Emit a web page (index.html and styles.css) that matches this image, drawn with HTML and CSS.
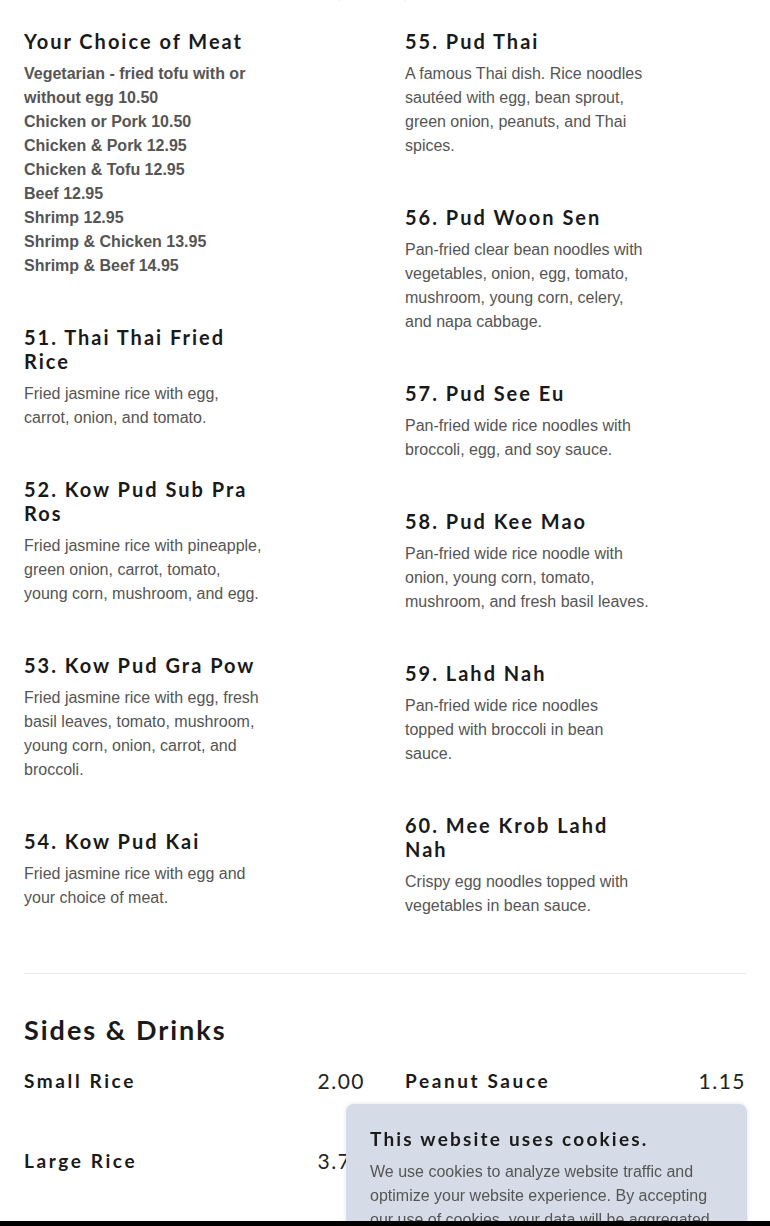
FILE: index.html
```html
<!DOCTYPE html>
<html lang="en">
<head>
<meta charset="utf-8">
<title>Menu - Fried Rice &amp; Noodles</title>
<link rel="stylesheet" href="styles.css">
</head>
<body>
<main class="page">
  <p class="intro">All noodle and rice dishes can be made mild, medium, hot or Thai hot.</p>
  <section class="menu-grid">
    <div class="col col-left">
      <div class="item">
        <h3 class="item-title">Your Choice of Meat</h3>
        <ul class="choices">
          <li>Vegetarian - fried tofu with or without egg 10.50</li>
          <li>Chicken or Pork 10.50</li>
          <li>Chicken &amp; Pork 12.95</li>
          <li>Chicken &amp; Tofu 12.95</li>
          <li>Beef 12.95</li>
          <li>Shrimp 12.95</li>
          <li>Shrimp &amp; Chicken 13.95</li>
          <li>Shrimp &amp; Beef 14.95</li>
        </ul>
      </div>
      <div class="item">
        <h3 class="item-title">51. Thai Thai Fried Rice</h3>
        <p class="desc">Fried jasmine rice with egg, carrot, onion, and tomato.</p>
      </div>
      <div class="item">
        <h3 class="item-title">52. Kow Pud Sub Pra Ros</h3>
        <p class="desc">Fried jasmine rice with pineapple, green onion, carrot, tomato, young corn, mushroom, and egg.</p>
      </div>
      <div class="item">
        <h3 class="item-title">53. Kow Pud Gra Pow</h3>
        <p class="desc">Fried jasmine rice with egg, fresh basil leaves, tomato, mushroom, young corn, onion, carrot, and broccoli.</p>
      </div>
      <div class="item">
        <h3 class="item-title">54. Kow Pud Kai</h3>
        <p class="desc">Fried jasmine rice with egg and your choice of meat.</p>
      </div>
    </div>
    <div class="col col-right">
      <div class="item">
        <h3 class="item-title">55. Pud Thai</h3>
        <p class="desc">A famous Thai dish. Rice noodles sautéed with egg, bean sprout, green onion, peanuts, and Thai spices.</p>
      </div>
      <div class="item">
        <h3 class="item-title">56. Pud Woon Sen</h3>
        <p class="desc">Pan-fried clear bean noodles with vegetables, onion, egg, tomato, mushroom, young corn, celery, and napa cabbage.</p>
      </div>
      <div class="item">
        <h3 class="item-title">57. Pud See Eu</h3>
        <p class="desc">Pan-fried wide rice noodles with broccoli, egg, and soy sauce.</p>
      </div>
      <div class="item">
        <h3 class="item-title">58. Pud Kee Mao</h3>
        <p class="desc">Pan-fried wide rice noodle with onion, young corn, tomato, mushroom, and fresh basil leaves.</p>
      </div>
      <div class="item">
        <h3 class="item-title">59. Lahd Nah</h3>
        <p class="desc">Pan-fried wide rice noodles topped with broccoli in bean sauce.</p>
      </div>
      <div class="item">
        <h3 class="item-title">60. Mee Krob Lahd Nah</h3>
        <p class="desc">Crispy egg noodles topped with vegetables in bean sauce.</p>
      </div>
    </div>
  </section>
  <hr class="divider">
  <section class="sides">
    <h2 class="section-title">Sides &amp; Drinks</h2>
    <div class="sides-grid">
      <div class="side"><span class="side-name">Small Rice</span><span class="side-price">2.00</span></div>
      <div class="side"><span class="side-name">Peanut Sauce</span><span class="side-price">1.15</span></div>
      <div class="side"><span class="side-name">Large Rice</span><span class="side-price">3.75</span></div>
      <div class="side"><span class="side-name">Sticky Rice</span><span class="side-price">3.00</span></div>
    </div>
  </section>
</main>
<div class="cookie">
  <h4 class="cookie-title">This website uses cookies.</h4>
  <p class="cookie-text">We use cookies to analyze website traffic and optimize your website experience. By accepting our use of cookies, your data will be aggregated with all other user data.</p>
</div>
<div class="bottom-bar"></div>
</body>
</html>
```

FILE: styles.css
```css
html, body {
  margin: 0;
  padding: 0;
  background: #fff;
  overflow: hidden;
}
body {
  font-family: "Liberation Sans", Arial, sans-serif;
  color: #555;
}
.page {
  padding: 0 24px;
  margin-top: -18px;
}
.intro {
  margin: 0 0 23px;
  font-size: 16px;
  line-height: 24px;
  color: #e6e6e6;
}
.menu-grid {
  display: grid;
  grid-template-columns: 1fr 1fr;
  column-gap: 40px;
}
.col {
  display: flex;
  flex-direction: column;
  gap: 47px;
}
.col-left .item {
  max-width: 243.5px;
}
.col-right .item {
  max-width: 246px;
}
.item-title {
  margin: 0 0 9px;
  font-family: Lato, "Open Sans", sans-serif;
  font-weight: 700;
  font-size: 20px;
  line-height: 24px;
  letter-spacing: 2px;
  color: #1a1a1a;
}
.desc {
  margin: 0;
  font-size: 16px;
  line-height: 24px;
  color: #555;
}
.choices {
  list-style: none;
  margin: 0;
  padding: 0;
  font-size: 16px;
  line-height: 24px;
  font-weight: 700;
  color: #555;
}
.divider {
  margin: 55px 0 0;
  border: 0;
  border-top: 1px solid #e6e6e6;
}
.sides {
  padding-top: 40px;
}
.section-title {
  margin: 0 0 22px;
  font-family: Lato, "Open Sans", sans-serif;
  font-weight: 700;
  font-size: 27px;
  line-height: 32px;
  letter-spacing: 2px;
  color: #1a1a1a;
}
.sides-grid {
  display: grid;
  grid-template-columns: 1fr 1fr;
  column-gap: 40px;
  row-gap: 56px;
}
.side {
  display: flex;
  justify-content: space-between;
  align-items: center;
  height: 24px;
}
.side-name {
  font-family: Lato, "Open Sans", sans-serif;
  font-weight: 700;
  font-size: 19px;
  letter-spacing: 2.6px;
  color: #1a1a1a;
}
.side-price {
  font-family: Lato, "Open Sans", sans-serif;
  font-weight: 400;
  font-size: 21px;
  letter-spacing: 1.5px;
  color: #222;
}
.cookie {
  position: fixed;
  left: 346px;
  top: 1104px;
  width: 353px;
  padding: 23px 24px 24px;
  background: #d6dce7;
  border-radius: 8px;
  box-shadow: 0 0 4px rgba(0, 0, 0, 0.12);
}
.cookie-title {
  margin: 0 0 9px;
  font-family: Lato, "Open Sans", sans-serif;
  font-weight: 700;
  font-size: 19px;
  line-height: 24px;
  letter-spacing: 2.2px;
  color: #1a1a1a;
}
.cookie-text {
  margin: 0;
  font-size: 16px;
  line-height: 24px;
  color: #555;
}
.bottom-bar {
  position: fixed;
  left: 0;
  right: 0;
  bottom: 0;
  height: 5px;
  background: #000;
}
```
